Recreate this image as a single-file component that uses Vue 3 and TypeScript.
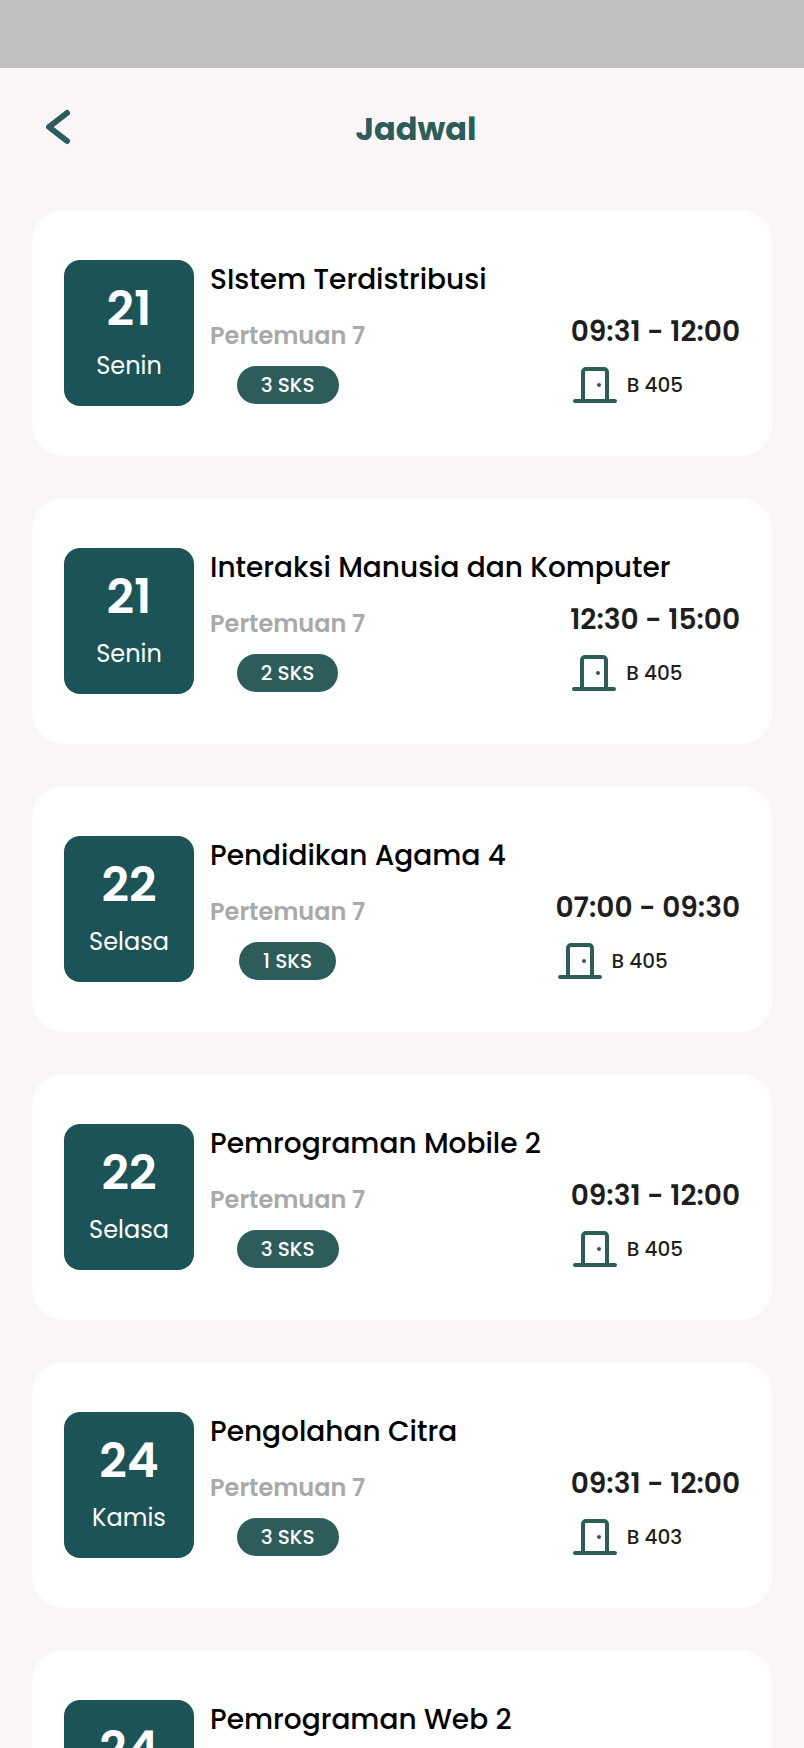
<script setup lang="ts">
interface ClassSession {
  date: number
  day: string
  course: string
  meeting: string
  credits: string
  time: string
  room: string
}

const sessions: ClassSession[] = [
  { date: 21, day: 'Senin', course: 'SIstem Terdistribusi', meeting: 'Pertemuan 7', credits: '3 SKS', time: '09:31 - 12:00', room: 'B 405' },
  { date: 21, day: 'Senin', course: 'Interaksi Manusia dan Komputer', meeting: 'Pertemuan 7', credits: '2 SKS', time: '12:30 - 15:00', room: 'B 405' },
  { date: 22, day: 'Selasa', course: 'Pendidikan Agama 4', meeting: 'Pertemuan 7', credits: '1 SKS', time: '07:00 - 09:30', room: 'B 405' },
  { date: 22, day: 'Selasa', course: 'Pemrograman Mobile 2', meeting: 'Pertemuan 7', credits: '3 SKS', time: '09:31 - 12:00', room: 'B 405' },
  { date: 24, day: 'Kamis', course: 'Pengolahan Citra', meeting: 'Pertemuan 7', credits: '3 SKS', time: '09:31 - 12:00', room: 'B 403' },
  { date: 24, day: 'Kamis', course: 'Pemrograman Web 2', meeting: 'Pertemuan 7', credits: '3 SKS', time: '09:31 - 12:00', room: 'B 403' },
]
</script>

<template>
  <div class="screen">
    <div class="status-bar"></div>
    <header class="header">
      <button class="back" type="button" aria-label="Kembali">
        <svg width="28" height="40" viewBox="0 0 28 40" fill="none" stroke="currentColor" stroke-width="6" stroke-linecap="round" stroke-linejoin="round">
          <path d="M21 4 3 18 21 32" />
        </svg>
      </button>
      <h1 class="heading">Jadwal</h1>
    </header>
    <main class="list">
      <article v-for="(s, i) in sessions" :key="i" class="card">
        <div class="date">
          <span class="date-number">{{ s.date }}</span>
          <span class="date-day">{{ s.day }}</span>
        </div>
        <div class="body">
          <h2 class="course">{{ s.course }}</h2>
          <div class="details">
            <div class="meeting">
              <span class="meeting-label">{{ s.meeting }}</span>
              <span class="credits">{{ s.credits }}</span>
            </div>
            <div class="slot">
              <span class="time">{{ s.time }}</span>
              <span class="room">
                <svg class="door" width="48" height="40" viewBox="0 2 24 20" fill="none" stroke="currentColor" stroke-width="2" stroke-linecap="round" stroke-linejoin="round" aria-hidden="true">
                  <path d="M2 20h20M6 20V5.500A1.500 1.500 0 0 1 7.500 4h9A1.500 1.500 0 0 1 18 5.500V20" />
                  <circle cx="14" cy="12" r="1" fill="currentColor" stroke="none" />
                </svg>
                {{ s.room }}
              </span>
            </div>
          </div>
        </div>
      </article>
    </main>
  </div>
</template>

<style>
body {
  margin: 0;
  background: #faf6f7;
}
</style>

<style scoped>
.screen {
  display: flex;
  flex-direction: column;
  height: 100vh;
  overflow: hidden;
  background: #faf6f7;
  font-family: Poppins, Inter, "Liberation Sans", sans-serif;
  color: #1e1e1e;
}
.status-bar {
  flex: none;
  height: 68px;
  background: #bfbfbf;
}
.header {
  flex: none;
  display: flex;
  align-items: center;
  padding: 37px 46px 57px;
}
.back {
  display: flex;
  padding: 0;
  border: 0;
  background: none;
  color: #2c5d5a;
  cursor: pointer;
}
.heading {
  flex: 1;
  margin: 0;
  font-size: 32px;
  line-height: 48px;
  font-weight: 700;
  text-align: center;
  color: #2c5d5a;
}
.list {
  flex: 1;
  min-height: 0;
  display: flex;
  flex-direction: column;
  gap: 42px;
  padding: 0 32px;
  overflow-y: auto;
  scrollbar-width: none;
}
.card {
  flex: none;
  display: flex;
  gap: 16px;
  padding: 50px 32px;
  border-radius: 32px;
  background: #fff;
}
.date {
  flex: none;
  box-sizing: border-box;
  display: flex;
  flex-direction: column;
  align-items: center;
  width: 130px;
  height: 146px;
  padding-top: 13px;
  border-radius: 16px;
  background: #1c5357;
  color: #fff;
}
.date-number {
  font-size: 48px;
  line-height: 72px;
  font-weight: 600;
}
.date-day {
  font-size: 24px;
  line-height: 42px;
}
.body {
  flex: 1;
  min-width: 0;
}
.course {
  margin: 0;
  font-size: 28px;
  line-height: 40px;
  font-weight: 500;
  color: #000;
}
.details {
  display: flex;
  justify-content: space-between;
  align-items: flex-start;
}
.meeting {
  display: flex;
  flex-direction: column;
  align-items: center;
  gap: 12px;
  padding-top: 18px;
}
.meeting-label {
  font-size: 24px;
  line-height: 36px;
  font-weight: 600;
  color: #a9a9a9;
}
.credits {
  padding: 4px 24px;
  border-radius: 19px;
  background: #2c5d5a;
  font-size: 20px;
  line-height: 30px;
  font-weight: 500;
  color: #fff;
}
.slot {
  display: flex;
  flex-direction: column;
  padding-top: 11px;
}
.time {
  font-size: 28px;
  line-height: 42px;
  font-weight: 600;
}
.room {
  display: flex;
  align-items: center;
  gap: 8px;
  padding-top: 12px;
  font-size: 20px;
  line-height: 30px;
  font-weight: 500;
}
.door {
  color: #2c5d5a;
}
</style>
